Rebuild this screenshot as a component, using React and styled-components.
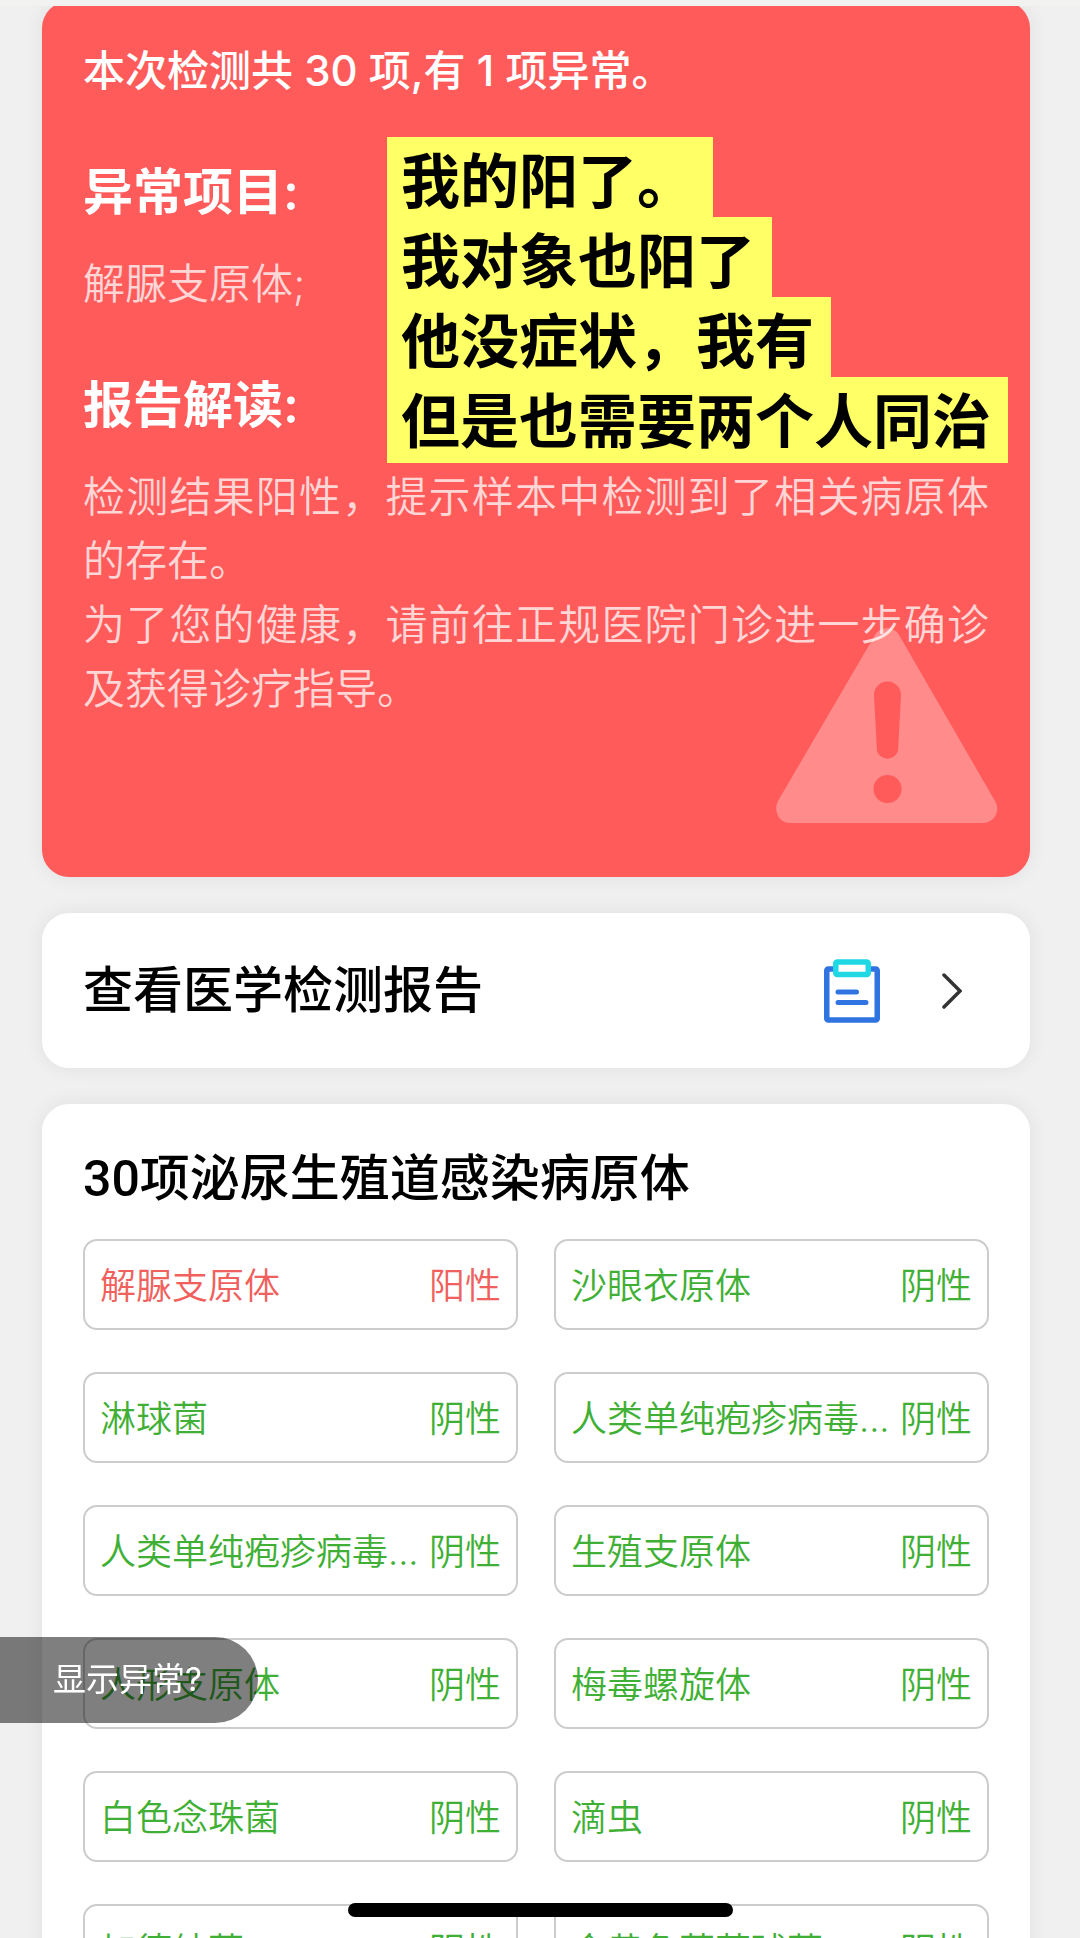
import React from "react";
import styled, { createGlobalStyle } from "styled-components";

const positive = "阳性";
const negative = "阴性";

const items = [
  { id: 1, name: "解脲支原体", result: positive },
  { id: 2, name: "沙眼衣原体", result: negative },
  { id: 3, name: "淋球菌", result: negative },
  { id: 4, name: "人类单纯疱疹病毒...", result: negative },
  { id: 5, name: "人类单纯疱疹病毒...", result: negative },
  { id: 6, name: "生殖支原体", result: negative },
  { id: 7, name: "人形支原体", result: negative },
  { id: 8, name: "梅毒螺旋体", result: negative },
  { id: 9, name: "白色念珠菌", result: negative },
  { id: 10, name: "滴虫", result: negative },
  { id: 11, name: "加德纳菌", result: negative },
  { id: 12, name: "金黄色葡萄球菌", result: negative },
];

const notes = ["我的阳了。", "我对象也阳了", "他没症状，我有", "但是也需要两个人同治"];

const WarningIcon = () => (
  <WarningSvg viewBox="0 0 222 196" aria-hidden="true">
    <path
      fill="#ff8b8b"
      fillRule="evenodd"
      d="M14 196C3 196 -3 184 2 174L99 8C104 -1 118 -1 123 8L219 174C225 184 218 196 207 196ZM98 68L101 124A11 11 0 0 0 122 124L125 68A13.5 13.5 0 0 0 98 68ZM111.500 148A14 14 0 1 0 111.500 176A14 14 0 1 0 111.500 148Z"
    />
  </WarningSvg>
);

const ClipboardIcon = () => (
  <svg width="56" height="64" viewBox="0 0 56 64" fill="none" aria-hidden="true">
    <rect x="2.750" y="10" width="50.500" height="51" rx="1.500" stroke="#2f74e0" strokeWidth="5.500" />
    <rect x="11.750" y="3" width="32.500" height="12.500" rx="1.500" fill="#fff" stroke="#20d8e4" strokeWidth="5.500" />
    <path d="M14 33H32.500M14 43.500H42" stroke="#2f74e0" strokeWidth="5" strokeLinecap="round" />
  </svg>
);

const ChevronIcon = () => (
  <svg width="20" height="36" viewBox="0 0 20 36" fill="none" aria-hidden="true">
    <path d="M2 2L18 18L2 34" stroke="#333" strokeWidth="3.500" strokeLinecap="round" />
  </svg>
);

const App = () => {
  return (
    <Page>
      <GlobalStyle />
      <TopBar />
      <SummaryCard>
        <WarningIcon />
        <Summary>本次检测共 30 项,有 1 项异常。</Summary>
        <SummaryHeading>异常项目:</SummaryHeading>
        <SummaryText>解脲支原体;</SummaryText>
        <SummaryHeading>报告解读:</SummaryHeading>
        <SummaryText>检测结果阳性，提示样本中检测到了相关病原体的存在。</SummaryText>
        <SummaryText>为了您的健康，请前往正规医院门诊进一步确诊及获得诊疗指导。</SummaryText>
        <Notes>
          {notes.map((note) => (
            <Note key={note}>{note}</Note>
          ))}
        </Notes>
      </SummaryCard>
      <ReportLink href="#report">
        <Title>查看医学检测报告</Title>
        <LinkIcons>
          <ClipboardIcon />
          <ChevronIcon />
        </LinkIcons>
      </ReportLink>
      <ResultCard>
        <Title>30项泌尿生殖道感染病原体</Title>
        <ResultGrid>
          {items.map(({ id, name, result }) => (
            <ResultItem key={id} $positive={result === positive}>
              <span>{name}</span>
              <span>{result}</span>
            </ResultItem>
          ))}
        </ResultGrid>
      </ResultCard>
      <HelpButton type="button">显示异常?</HelpButton>
      <HomeIndicator />
    </Page>
  );
};
export default App;

const GlobalStyle = createGlobalStyle`
  * {
    box-sizing: border-box;
  }

  body {
    margin: 0;
    background: #f0f0f0;
    font-family: Inter, "Noto Sans CJK SC", sans-serif;
  }
`;

const Page = styled.main`
  display: flex;
  flex-direction: column;
  gap: 36px;
  height: 100vh;
  padding: 1px 50px 0 42px;
  overflow: hidden;
`;

const TopBar = styled.div`
  position: fixed;
  top: 0;
  left: 0;
  right: 0;
  height: 6px;
  background: #f2f2f0;
  z-index: 10;
`;

const Card = styled.section`
  flex-shrink: 0;
  border-radius: 27px;
  background: #fff;
  box-shadow: 0 0 20px rgba(0, 0, 0, 0.07);
`;

const SummaryCard = styled(Card)`
  position: relative;
  padding: 38px 41px 156px;
  background: #ff5b5b;
  color: #fff;
`;

const WarningSvg = styled.svg`
  position: absolute;
  right: 32px;
  bottom: 54px;
  width: 222px;
  height: 196px;
`;

const Summary = styled.p`
  position: relative;
  margin: 0;
  font-size: 42px;
  font-weight: 500;
  line-height: 64px;
`;

const SummaryHeading = styled.h2`
  margin: 57px 0 28px;
  font-size: 50px;
  font-weight: 600;
  line-height: 64px;
`;

const SummaryText = styled.p`
  position: relative;
  margin: 0;
  color: rgba(255, 255, 255, 0.75);
  font-size: 42px;
  font-weight: 350;
  line-height: 64px;
  text-align: justify;
`;

const Notes = styled.div`
  position: absolute;
  top: 136px;
  left: 345px;
  display: flex;
  flex-direction: column;
  align-items: flex-start;
`;

const Note = styled.p`
  margin: 0 0 -6px;
  padding: 4px 17px 0 14px;
  background: #ffff66;
  color: #000;
  font-size: 59px;
  font-weight: 700;
  line-height: 82px;
  white-space: nowrap;

  &:last-child {
    margin: 0;
  }
`;

const ReportLink = styled(Card).attrs({ as: "a" })`
  display: flex;
  align-items: center;
  justify-content: space-between;
  padding: 46px 68px 45px 41px;
  text-decoration: none;
`;

const Title = styled.h2`
  margin: 0;
  color: #000;
  font-family: Roboto, "Noto Sans CJK SC", sans-serif;
  font-size: 50px;
  font-weight: 500;
  line-height: 64px;
`;

const LinkIcons = styled.div`
  display: flex;
  align-items: center;
  gap: 62px;
`;

const ResultCard = styled(Card)`
  padding: 43px 41px;
`;

const ResultGrid = styled.ul`
  display: grid;
  grid-template-columns: repeat(2, minmax(0, 1fr));
  gap: 42px 36px;
  margin: 28px 0 0;
  padding: 0;
  list-style: none;
`;

const ResultItem = styled.li`
  display: flex;
  justify-content: space-between;
  height: 91px;
  padding: 2px 15px 0;
  border: 2px solid #ccc;
  border-radius: 14px;
  color: ${({ $positive }) => ($positive ? "#f0605c" : "#3fb035")};
  font-size: 36px;
  font-weight: 350;
  line-height: 86px;
  white-space: nowrap;
`;

const HelpButton = styled.button`
  position: fixed;
  bottom: 215px;
  left: 0;
  height: 86px;
  padding: 0 56px 6px 53px;
  border: 0;
  border-radius: 0 43px 43px 0;
  background: rgba(0, 0, 0, 0.5);
  color: #fff;
  font-family: inherit;
  font-size: 33px;
  cursor: pointer;
`;

const HomeIndicator = styled.div`
  position: fixed;
  right: 0;
  bottom: 21px;
  left: 0;
  width: 385px;
  height: 14px;
  margin: 0 auto;
  border-radius: 7px;
  background: #000;
`;
